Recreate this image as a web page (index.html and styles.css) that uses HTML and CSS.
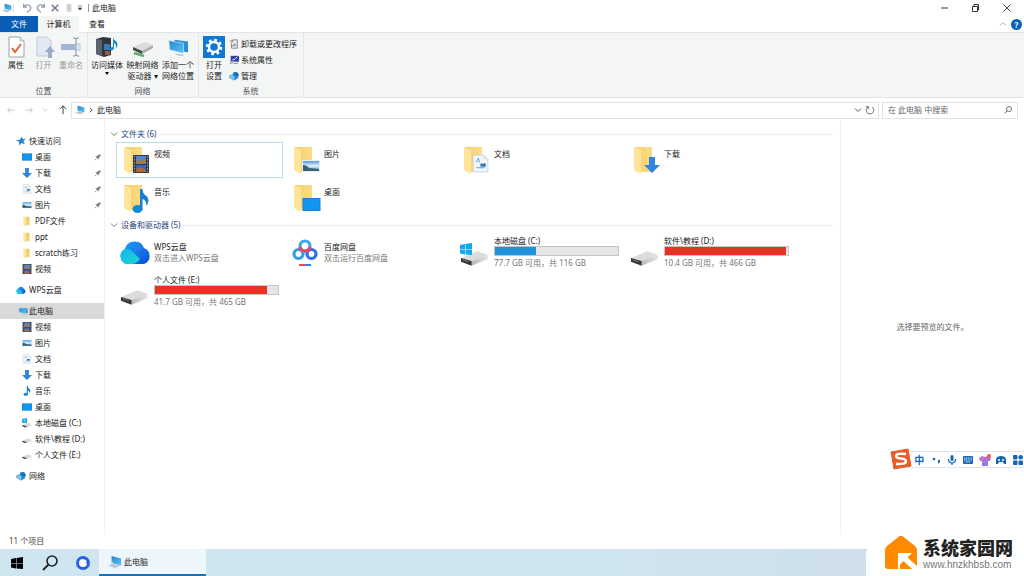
FILE: index.html
```html
<!DOCTYPE html>
<html lang="zh-CN">
<head>
<meta charset="utf-8">
<title>此电脑</title>
<link rel="stylesheet" href="styles.css">
</head>
<body>
<svg class="sprite" aria-hidden="true">
  <defs>
    <linearGradient id="g-screen" x1="0" y1="0" x2="1" y2="1"><stop offset="0" stop-color="#1e88d2"/><stop offset="1" stop-color="#5cc3f5"/></linearGradient>
    <linearGradient id="g-folder" x1="0" y1="0" x2="1" y2="0"><stop offset="0" stop-color="#f6cf6c"/><stop offset="1" stop-color="#fbdc85"/></linearGradient>
    <linearGradient id="g-drive" x1="0" y1="0" x2="1" y2="0"><stop offset="0" stop-color="#b9b9b9"/><stop offset="1" stop-color="#e6e6e6"/></linearGradient>
    <linearGradient id="g-cloud" x1="0" y1="0" x2="1" y2="1"><stop offset="0" stop-color="#1fa4fb"/><stop offset="1" stop-color="#0a50d8"/></linearGradient>
    <linearGradient id="g-cyan" x1="0" y1="0" x2="1" y2="1"><stop offset="0" stop-color="#12b7ee"/><stop offset="1" stop-color="#20d6cf"/></linearGradient>
    <linearGradient id="g-photo" x1="0" y1="0" x2="0" y2="1"><stop offset="0" stop-color="#4f9ddb"/><stop offset=".5" stop-color="#e3f1fa"/><stop offset="1" stop-color="#3f8db8"/></linearGradient>
    <linearGradient id="g-shirt" x1="0" y1="0" x2="1" y2="1"><stop offset="0" stop-color="#e06bc0"/><stop offset="1" stop-color="#6f83f2"/></linearGradient>
  </defs>
  <symbol id="pc" viewBox="0 0 16 16"><path d="M4 1l11 3v8L5 9z" fill="url(#g-screen)"/><path d="M3 1l1 0 1 8-1 1z" fill="#8ccdf0"/><path d="M0 12l6-2 8 2-6 3z" fill="#bcc9d0"/></symbol>
  <symbol id="pcs" viewBox="0 0 24 20"><path d="M8 2l15 2v12L9 13z" fill="#2c8fd6"/><path d="M2 3l16 3v11L3 13z" fill="url(#g-screen)" stroke="#dff1fb" stroke-width=".6"/><path d="M8 17l8 1 3 2-8-1z" fill="#a9c6d4"/></symbol>
  <symbol id="folder" viewBox="0 0 26 30"><path d="M2 1h17v25H7z" fill="url(#g-folder)"/><path d="M1 1l7 3v24l-2-1-5-3z" fill="#ffe49a"/></symbol>
  <symbol id="folder-s" viewBox="0 0 12 12"><path d="M2 1h7v10H2z" fill="#f4cd69"/><path d="M2 1l3 1v10l-3-1z" fill="#ffe6a0"/></symbol>
  <symbol id="film" viewBox="0 0 16 18"><path d="M0 0h16v18H0z" fill="#343a48"/><path d="M3 1h10v8H3z" fill="#4f86dc"/><path d="M3 6l4-3 2 2 4-1v5H3z" fill="#9a7a5a"/><path d="M3 10h10v7H3z" fill="#2f66c4"/><path d="M3 14l5-2 5 3v2H3z" fill="#b8643f"/><path d="M1.500 1v16M14.500 1v16" stroke="#c4cad6" stroke-width=".7" stroke-dasharray="1.500 1.500"/></symbol>
  <symbol id="photo" viewBox="0 0 18 14"><path d="M0 1h18v12H0z" fill="#e6eef3"/><path d="M1 2h16v10H1z" fill="url(#g-photo)"/><path d="M1 6q4 0 6 3l10 1v2H1z" fill="#37627a"/></symbol>
  <symbol id="doc" viewBox="0 0 16 18"><path d="M1 1h10l4 4v12H1z" fill="#f1f6fa" stroke="#bccad3" stroke-width=".7"/><path d="M11 1v4h4" fill="#d6e1e8"/><path d="M4 8l2-4 1 4M8 10h5M4 13h8" stroke="#3d95d2" stroke-width=".8" fill="none"/><path d="M8 9h5v3H8z" fill="#3474b4"/></symbol>
  <symbol id="down" viewBox="0 0 16 16"><path d="M5 0h6v8h5l-8 8-8-8h5z" fill="#2b86dc"/></symbol>
  <symbol id="note" viewBox="0 0 16 24"><ellipse cx="5" cy="20" rx="5" ry="4" fill="#0f8bdc"/><path d="M7.500 0h2.500q0 5 4 7 4 4 0 10 0-6-4-7v11H7.500z" fill="#1580d2"/></symbol>
  <symbol id="desk" viewBox="0 0 18 13"><path d="M0 0h18v13H0z" fill="#1380d4"/><path d="M1 1h16v11H1z" fill="#1197f2"/></symbol>
  <symbol id="cloud" viewBox="0 0 32 26"><path d="M8 25a8 8 0 0 1-2-15A10 10 0 0 1 25 9a8.500 8.500 0 0 1 0 16z" fill="url(#g-cloud)"/><path d="M6 10Q10 9 13 12l8 8q-4 5-8 5H8A8 8 0 0 1 6 10z" fill="url(#g-cyan)"/><path d="M13 12Q20 5 25 9q-5 1-9 6z" fill="#2e7bf0" opacity=".6"/></symbol>
  <symbol id="drive" viewBox="0 0 30 16"><path d="M1 8L18 1l11 4-17 6z" fill="#dcdcdc"/><path d="M12 11l17-6v4l-17 7z" fill="url(#g-drive)"/><path d="M1 8l11 3v5L1 12z" fill="#353535"/><path d="M3 10l6 2" stroke="#888" stroke-width=".8"/></symbol>
  <symbol id="win" viewBox="0 0 12 12"><path d="M0 2l5-1v5H0zM5.500 1l6.500-1v6H5.500zM0 6.500h5v5l-5-1zM5.500 6.500H12V12l-6.500-.5z"/></symbol>
  <symbol id="star" viewBox="0 0 16 16"><path d="M9 1l2 4 5-1-4 4 2 5-5-2-4 4 0-6-5-2 6-1z" fill="#2585cf"/></symbol>
  <symbol id="pin" viewBox="0 0 12 12"><path d="M7 1l4 4-2 0-2 3 0 2-5-5h2l3-2z" fill="#75797d"/><path d="M4 8l-3 3" stroke="#75797d"/></symbol>
  <symbol id="net" viewBox="0 0 16 16"><path d="M0 7l6-2 1-3 6-1 3 5-2 6-6 3-7-4z" fill="#2b8bce"/><path d="M0 7l6-1 3 4-1 5-7-4z" fill="#7fc0e8"/><path d="M9 2l6 3-2 4-5-3z" fill="#166fb6"/></symbol>
  <symbol id="baidu" viewBox="0 0 26 28"><g fill="none" stroke-width="3.200"><circle cx="6.500" cy="15" r="4.500" stroke="#2f9cf0"/><circle cx="19.500" cy="15" r="4.500" stroke="#2c6ff0"/><circle cx="13" cy="7" r="5" stroke="#38a8ef"/><path d="M8 8a5 5 0 0 0 5 4 5 5 0 0 0 5-4" stroke="#f0445a"/></g><path d="M7 26h6" stroke="#eb4b56" stroke-width="2"/><path d="M13 26h6" stroke="#2e86ee" stroke-width="2"/></symbol>
  <symbol id="chev" viewBox="0 0 8 8"><path d="M1 2.500l3 3 3-3" fill="none" stroke="currentColor"/></symbol>
  <symbol id="undo" viewBox="0 0 12 12"><path d="M2 1v4h4M2 5q3-4 7-2 3 3 0 6l-3 2" fill="none" stroke="currentColor" stroke-width="1.500"/></symbol>
  <symbol id="cross" viewBox="0 0 12 12"><path d="M2 2l8 8M10 2l-8 8" fill="none" stroke="currentColor" stroke-width="1.600"/></symbol>
  <symbol id="glass" viewBox="0 0 16 16"><circle cx="10" cy="6" r="5" fill="none" stroke="currentColor" stroke-width="1.600"/><path d="M6.500 9.500L1 15" stroke="currentColor" stroke-width="1.800"/></symbol>
  <symbol id="arrow" viewBox="0 0 12 12"><path d="M11 6H1M5 2L1 6l4 4" fill="none" stroke="currentColor" stroke-width="1.200"/></symbol>
</svg>

<div class="window">
  <header class="titlebar">
    <svg class="ic10"><use href="#pc"/></svg>
    <span class="rule"></span>
    <button class="tool" aria-label="撤消"><svg class="ic10"><use href="#undo"/></svg></button>
    <button class="tool" aria-label="恢复"><svg class="ic10 flip"><use href="#undo"/></svg></button>
    <button class="tool dark" aria-label="删除"><svg class="ic10"><use href="#cross"/></svg></button>
    <button class="tool" aria-label="属性"><svg class="ic10" viewBox="0 0 12 12"><path d="M3 1h6v10H3z" fill="#d9dde1"/><path d="M4 3h4M4 5h4M4 7h4" stroke="#b8bec4"/></svg></button>
    <button class="tool narrow" aria-label="自定义"><svg class="ic6" viewBox="0 0 6 6"><path d="M1 1h4M1 3h4L3 5z" stroke="#444" stroke-width=".6" fill="#444"/></svg></button>
    <span class="rule strong"></span>
    <h1>此电脑</h1>
    <div class="winctl">
      <button aria-label="最小化"><svg class="ic10" viewBox="0 0 10 10"><path d="M2 5h7" stroke="#333"/></svg></button>
      <button aria-label="还原"><svg class="ic10" viewBox="0 0 10 10"><path d="M2.500 3.500h5v5h-5zM4 3V1.500h4.500V7H8" fill="none" stroke="#333"/></svg></button>
      <button aria-label="关闭"><svg class="ic10" viewBox="0 0 10 10"><path d="M1.500 1.500l7 7M8.500 1.500l-7 7" stroke="#333" stroke-width=".9"/></svg></button>
    </div>
  </header>

  <nav class="tabs">
    <button class="tab file">文件</button>
    <button class="tab on">计算机</button>
    <button class="tab">查看</button>
    <div class="tabend">
      <svg class="ic8 up"><use href="#chev"/></svg>
      <button class="help" aria-label="帮助">?</button>
    </div>
  </nav>

  <section class="ribbon">
    <div class="group place">
      <div class="tools">
        <button class="big"><svg class="ic22" viewBox="0 0 22 22"><path d="M4 1h11l4 4v16H4z" fill="#fff" stroke="#9aa3ab"/><path d="M15 1v4h4" fill="#dde3e8" stroke="#9aa3ab" stroke-width=".7"/><path d="M7 12l3 4 6-8" fill="none" stroke="#e0652f" stroke-width="2"/></svg><span>属性</span></button>
        <button class="big" disabled><svg class="ic22" viewBox="0 0 22 22"><path d="M4 1h10l4 4v15H4z" fill="#e3e9f4" stroke="#c0c9da"/><path d="M15 22v-6h-3l5-6 5 6h-3v6z" fill="#9eabc7"/></svg><span>打开</span></button>
        <button class="big" disabled><svg class="ic22" viewBox="0 0 22 22"><path d="M1 8h14v6H1z" fill="#a4b6d7"/><path d="M15 8h5v6h-5" fill="#e5ebf5" stroke="#b9c4d6"/><path d="M13 2h2l1 1 1-1h2M16 3v16M13 20h2l1-1 1 1h2" fill="none" stroke="#8391a9"/></svg><span>重命名</span></button>
      </div>
      <p>位置</p>
    </div>
    <div class="group network">
      <div class="tools">
        <button class="big"><svg class="ic22" viewBox="0 0 22 22"><path d="M0 3l7-2 8 1v17l-7 2-8-3z" fill="#30363f"/><path d="M0 3l6 1v16l-6-2z" fill="#59616c"/><path d="M8 8h6v6H8z" fill="#3b78b4"/><path d="M9 15h5v4H9z" fill="#935943"/><path d="M17 0q0 4 3 5 3 4 0 8 1-4-2-6v6q-4 3-4 0 0-2 3-2z" fill="#178bd8"/></svg><span>访问媒体</span><svg class="ic6" viewBox="0 0 6 6"><path d="M1 1h4L3 4z"/></svg></button>
        <button class="big"><svg class="ic22" viewBox="0 0 22 22"><path d="M1 11l12-5 8 3-11 6z" fill="#dcdcdc"/><path d="M10 15l11-6v3l-11 6z" fill="#aaa"/><path d="M1 11l9 4v3l-9-4z" fill="#3b4b42"/><path d="M2 17l10 3" stroke="#5cae6c" stroke-width="2.500"/></svg><span>映射网络<br>驱动器 ▾</span></button>
        <button class="big"><svg class="ic22"><use href="#pcs"/></svg><span>添加一个<br>网络位置</span></button>
      </div>
      <p>网络</p>
    </div>
    <div class="group system">
      <div class="tools">
        <button class="big"><svg class="ic22" viewBox="0 0 22 22"><path d="M0 0h22v22H0z" fill="#0f78d2"/><circle cx="11" cy="11" r="5" fill="none" stroke="#fff" stroke-width="2.400"/><circle cx="11" cy="11" r="7" fill="none" stroke="#fff" stroke-width="2.600" stroke-dasharray="2.750 2.750"/></svg><span>打开<br>设置</span></button>
        <ul class="small">
          <li><button><svg class="ic10" viewBox="0 0 12 12"><path d="M5 1h5v10H3V5z" fill="#eee" stroke="#777"/><path d="M1 3l4-2M3 8h4" stroke="#777"/><circle cx="7" cy="7" r="2" fill="#aaa"/></svg>卸载或更改程序</button></li>
          <li><button><svg class="ic10" viewBox="0 0 12 12"><path d="M2 1h10v7H2z" fill="#3141a8"/><path d="M4 5l2 1 4-4" stroke="#fff" fill="none"/><path d="M1 8l4-1 1 3-5 1z" fill="#a9b4bd"/><path d="M6 10h5" stroke="#777"/></svg>系统属性</button></li>
          <li><button><svg class="ic10"><use href="#net"/></svg>管理</button></li>
        </ul>
      </div>
      <p>系统</p>
    </div>
  </section>

  <div class="addressrow">
    <div class="history">
      <button disabled aria-label="后退"><svg class="ic8"><use href="#arrow"/></svg></button>
      <button disabled aria-label="前进"><svg class="ic8 flip"><use href="#arrow"/></svg></button>
      <button disabled aria-label="最近"><svg class="ic6"><use href="#chev"/></svg></button>
      <button aria-label="上移"><svg class="ic10 quarter"><use href="#arrow"/></svg></button>
    </div>
    <div class="address">
      <svg class="ic10"><use href="#pc"/></svg>
      <svg class="ic6 side"><use href="#chev"/></svg>
      <a href="#pc">此电脑</a>
      <button class="drop" aria-label="展开"><svg class="ic8"><use href="#chev"/></svg></button>
      <button aria-label="刷新"><svg class="ic10" viewBox="0 0 12 12"><path d="M8.500 2.500a4.500 4.500 0 1 1-5 0M1 2h3v3" fill="none" stroke="#555"/></svg></button>
    </div>
    <div class="search">
      <input type="text" placeholder="在 此电脑 中搜索" aria-label="在 此电脑 中搜索">
      <svg class="ic8"><use href="#glass"/></svg>
    </div>
  </div>

  <main class="body">
    <nav class="tree">
      <ul>
        <li class="root"><a href="#q"><svg class="ic10"><use href="#star"/></svg>快速访问</a></li>
        <li><a href="#a"><svg class="ic10"><use href="#desk"/></svg>桌面<svg class="ic8 pin"><use href="#pin"/></svg></a></li>
        <li><a href="#a"><svg class="ic10"><use href="#down"/></svg>下载<svg class="ic8 pin"><use href="#pin"/></svg></a></li>
        <li><a href="#a"><svg class="ic10"><use href="#doc"/></svg>文档<svg class="ic8 pin"><use href="#pin"/></svg></a></li>
        <li><a href="#a"><svg class="ic10"><use href="#photo"/></svg>图片<svg class="ic8 pin"><use href="#pin"/></svg></a></li>
        <li><a href="#a"><svg class="ic10"><use href="#folder-s"/></svg>PDF文件</a></li>
        <li><a href="#a"><svg class="ic10"><use href="#folder-s"/></svg>ppt</a></li>
        <li><a href="#a"><svg class="ic10"><use href="#folder-s"/></svg>scratch练习</a></li>
        <li><a href="#a"><svg class="ic10"><use href="#film"/></svg>视频</a></li>
      </ul>
      <ul>
        <li class="root"><a href="#w"><svg class="ic10"><use href="#cloud"/></svg>WPS云盘</a></li>
      </ul>
      <ul>
        <li class="root current"><a href="#p"><svg class="ic10"><use href="#pcs"/></svg>此电脑</a></li>
        <li><a href="#a"><svg class="ic10"><use href="#film"/></svg>视频</a></li>
        <li><a href="#a"><svg class="ic10"><use href="#photo"/></svg>图片</a></li>
        <li><a href="#a"><svg class="ic10"><use href="#doc"/></svg>文档</a></li>
        <li><a href="#a"><svg class="ic10"><use href="#down"/></svg>下载</a></li>
        <li><a href="#a"><svg class="ic10"><use href="#note"/></svg>音乐</a></li>
        <li><a href="#a"><svg class="ic10"><use href="#desk"/></svg>桌面</a></li>
        <li><a href="#a"><svg class="ic10" viewBox="0 0 30 30"><use href="#win" width="16" height="16" fill="#14a5ea"/><use href="#drive" y="13" width="30" height="16"/></svg>本地磁盘 (C:)</a></li>
        <li><a href="#a"><svg class="ic10" viewBox="0 0 30 26"><use href="#drive" y="10" width="30" height="16"/></svg>软件\教程 (D:)</a></li>
        <li><a href="#a"><svg class="ic10" viewBox="0 0 30 26"><use href="#drive" y="10" width="30" height="16"/></svg>个人文件 (E:)</a></li>
      </ul>
      <ul>
        <li class="root"><a href="#n"><svg class="ic10"><use href="#net"/></svg>网络</a></li>
      </ul>
    </nav>

    <div class="content">
      <h2><svg class="ic8"><use href="#chev"/></svg>文件夹 (6)</h2>
      <div class="grid">
        <a class="tile picked" href="#f"><svg class="ic30" viewBox="0 0 30 30"><use href="#folder" width="26" height="30"/><use href="#film" x="8" y="9" width="20" height="18"/></svg><span class="name">视频</span></a>
        <a class="tile" href="#f"><svg class="ic30" viewBox="0 0 30 30"><use href="#folder" width="26" height="30"/><use href="#photo" x="9" y="13" width="18" height="14"/></svg><span class="name">图片</span></a>
        <a class="tile" href="#f"><svg class="ic30" viewBox="0 0 30 30"><use href="#folder" width="26" height="30"/><use href="#doc" x="8" y="8" width="19" height="19"/></svg><span class="name">文档</span></a>
        <a class="tile" href="#f"><svg class="ic30" viewBox="0 0 30 30"><use href="#folder" width="26" height="30"/><use href="#down" x="11" y="11" width="16" height="16"/></svg><span class="name">下载</span></a>
        <a class="tile" href="#f"><svg class="ic30" viewBox="0 0 30 30"><use href="#folder" width="26" height="30"/><use href="#note" x="9" y="5" width="17" height="24"/></svg><span class="name">音乐</span></a>
        <a class="tile" href="#f"><svg class="ic30" viewBox="0 0 30 30"><use href="#folder" width="26" height="30"/><use href="#desk" x="9" y="14" width="19" height="13"/></svg><span class="name">桌面</span></a>
      </div>
      <h2><svg class="ic8"><use href="#chev"/></svg>设备和驱动器 (5)</h2>
      <div class="grid devices">
        <a class="tile" href="#d"><svg class="ic32"><use href="#cloud"/></svg><span class="info"><span class="name">WPS云盘</span><span class="note">双击进入WPS云盘</span></span></a>
        <a class="tile" href="#d"><svg class="ic32" viewBox="-3 -3 32 32"><use href="#baidu" width="26" height="28"/></svg><span class="info"><span class="name">百度网盘</span><span class="note">双击运行百度网盘</span></span></a>
        <a class="tile" href="#d"><svg class="ic32" viewBox="0 0 32 32"><use href="#drive" x="1" y="14" width="29" height="16"/><use href="#win" x="1" y="7" width="12" height="12" fill="#12a8ee"/></svg><span class="info"><span class="name">本地磁盘 (C:)</span><span class="meter"><span class="fill" style="width:33%"></span></span><span class="note">77.7 GB 可用，共 116 GB</span></span></a>
        <a class="tile" href="#d"><svg class="ic32" viewBox="0 0 32 32"><use href="#drive" x="1" y="14" width="29" height="16"/></svg><span class="info"><span class="name">软件\教程 (D:)</span><span class="meter"><span class="fill full" style="width:98%"></span></span><span class="note">10.4 GB 可用，共 466 GB</span></span></a>
        <a class="tile" href="#d"><svg class="ic32" viewBox="0 0 32 32"><use href="#drive" x="1" y="14" width="29" height="16"/></svg><span class="info"><span class="name">个人文件 (E:)</span><span class="meter"><span class="fill full" style="width:91%"></span></span><span class="note">41.7 GB 可用，共 465 GB</span></span></a>
      </div>
    </div>

    <aside class="preview">选择要预览的文件。</aside>
  </main>
  <footer class="status">11 个项目</footer>
</div>

<div class="taskbar">
  <button aria-label="开始"><svg class="ic12"><use href="#win"/></svg></button>
  <button aria-label="搜索"><svg class="ic16"><use href="#glass"/></svg></button>
  <button aria-label="浏览器"><svg class="ic14" viewBox="0 0 14 14"><circle cx="7" cy="7" r="7" fill="#285fe6"/><path d="M7 3a4 4 0 1 0 4 4q-2 1-3-1-1-1 0-3z" fill="#fff"/><circle cx="8.500" cy="5.500" r="2" fill="#fff"/></svg></button>
  <button class="task"><svg class="ic14"><use href="#pc"/></svg>此电脑</button>
</div>

<div class="ime">
  <svg class="ime-logo" viewBox="0 0 22 22"><path d="M1 4l17-3 3 17-17 3z" fill="#ea5b2a" stroke="#ea5b2a" stroke-linejoin="round"/><path d="M16 6q-10-1-10 2 0 2 5 2.500t5 3q0 3-10 2.500" fill="none" stroke="#fff" stroke-width="2.400"/></svg>
  <button class="lang">中</button>
  <button aria-label="标点"><svg class="ic10" viewBox="0 0 10 10"><circle cx="3" cy="4" r="1.300"/><path d="M7 5h2v2L7 9z"/></svg></button>
  <button aria-label="语音"><svg class="ic10" viewBox="0 0 10 10"><rect x="3.500" y="0" width="3" height="6" rx="1.500"/><path d="M1.500 4q0 4 3.500 4t3.500-4M5 8v2" fill="none" stroke="#1767b4" stroke-width="1.200"/></svg></button>
  <button aria-label="键盘"><svg class="ic10" viewBox="0 0 10 10"><rect y="1" width="10" height="8" rx="1"/><path d="M1 3h8M1 5h8M2.500 7h5" stroke="#fff" stroke-width=".9" stroke-dasharray="1.200 .6"/></svg></button>
  <button aria-label="皮肤"><svg class="ic12" viewBox="0 0 12 12"><path d="M0 4l3-2 3 1 3-1 3 2-1 3H9v5H3V7H1z" fill="url(#g-shirt)"/><circle cx="10" cy="2" r="2" fill="#f45948"/></svg></button>
  <button aria-label="游戏"><svg class="ic10" viewBox="0 0 10 10"><path d="M0 9V4q1-3 5-3t5 3v5H8L7 7H3L2 9z"/><path d="M2 5h2M6 5h2" stroke="#fff" stroke-width="1.300"/></svg></button>
  <button aria-label="工具箱"><svg class="ic10" viewBox="0 0 10 10"><rect width="4.500" height="4.500" rx="1"/><circle cx="7.700" cy="2.300" r="2.300"/><rect y="5.500" width="4.500" height="4.500" rx="1"/><rect x="5.500" y="5.500" width="4.500" height="4.500" rx="1"/></svg></button>
</div>

<div class="sitemark">
  <svg class="house" viewBox="0 0 32 34"><path d="M2 11L14 1.500q2-1.500 4 0L30 11q2 2 2 4v16q0 3-3 3H3q-3 0-3-3V15q0-2 2-4z" fill="#ff8a00"/><path d="M13 18h14l-4.500 4.500L32 31v3h-5l-8.500-8-3.500 3.500V34h-2z" fill="#fff"/></svg>
  <div class="sitename"><strong>系统家园网</strong><span>www.hnzkhbsb.com</span></div>
</div>
</body>
</html>
```
FILE: styles.css
```css
* { box-sizing: border-box; }
html, body { height: 100%; }
body {
  margin: 0;
  display: flex;
  flex-direction: column;
  position: relative;
  overflow: hidden;
  background: #fff;
  color: #222;
  font: 8px/12px "Noto Sans", "Noto Sans CJK SC", sans-serif;
}
button { margin: 0; padding: 0; border: 0; background: none; font: inherit; color: inherit; }
a { color: inherit; text-decoration: none; }
ul, p, h1, h2 { margin: 0; padding: 0; font: inherit; list-style: none; }
svg { display: block; flex: none; }
.sprite { position: absolute; width: 0; height: 0; }
.ic6 { width: 6px; height: 6px; }
.ic8 { width: 8px; height: 8px; }
.ic10 { width: 10px; height: 10px; }
.ic12 { width: 12px; height: 12px; }
.ic14 { width: 14px; height: 14px; }
.ic16 { width: 16px; height: 16px; }
.ic22 { width: 22px; height: 22px; }
.ic30 { width: 30px; height: 30px; }
.ic32 { width: 32px; height: 32px; }
.flip { transform: scaleX(-1); }
.up { transform: rotate(180deg); }
.quarter { transform: rotate(90deg); }
.side { transform: rotate(-90deg); }

.window { flex: 1; min-height: 0; display: flex; flex-direction: column; }

.titlebar { display: flex; align-items: center; height: 16px; padding-left: 2px; }
.rule { width: 1px; height: 8px; margin: 0 6px 0 1px; background: #ddd; }
.rule.strong { margin: 0 3px 0 4px; background: #999; }
.tool { width: 14px; display: grid; place-items: center; color: #8f9bb3; }
.tool.dark { color: #68738a; }
.tool.narrow { width: 8px; }
.winctl { display: flex; margin-left: auto; }
.winctl button { width: 31px; display: grid; place-items: center; }
.winctl button:last-child { width: 34px; }

.tabs { display: flex; height: 16px; }
.tab { padding: 0 10px; }
.tab.file { width: 38px; background: #0a5fb4; color: #fff; }
.tab.on { width: 41px; padding: 0; background: #f4f6f6; box-shadow: 0 1px #f4f6f6; z-index: 1; }
.tabend { display: flex; align-items: center; gap: 4px; margin-left: auto; padding-right: 2px; color: #aaa; }
.help { width: 11px; height: 11px; border-radius: 50%; background: #0b61b8; color: #fff; font-weight: 700; line-height: 11px; }

.ribbon { display: flex; height: 66px; background: #f4f6f6; border: solid #e2e4e5; border-width: 1px 0; }
.group { display: flex; flex-direction: column; justify-content: space-between; padding: 3px 4px 0; border-right: 1px solid #e4e6e8; text-align: center; }
.group p { color: #555; }
.place { width: 88px; }
.network { width: 111px; padding: 3px 4px 0 3px; }
.system { width: 105px; padding: 3px 4px 0 3px; }
.tools { display: flex; justify-content: space-between; }
.big { display: flex; flex-direction: column; align-items: center; gap: 1px; min-width: 24px; line-height: 11px; white-space: nowrap; }
.big:disabled { color: #999; }
.small { display: flex; flex-direction: column; }
.small button { display: flex; align-items: center; gap: 2px; height: 16px; white-space: nowrap; }
.system .tools { justify-content: flex-start; gap: 3px; }

.addressrow { display: flex; align-items: center; gap: 3px; height: 22px; padding: 2px 6px 0 7px; }
.history { display: flex; align-items: center; justify-content: space-between; width: 61px; color: #444; }
.history button:disabled { color: #bbb; }
.address { flex: 1; display: flex; align-items: center; gap: 3px; height: 17px; padding: 0 3px; border: 1px solid #e2e2e2; }
.drop { margin-left: auto; color: #555; }
.search { width: 136px; height: 17px; display: flex; align-items: center; padding: 0 5px; border: 1px solid #e2e2e2; color: #555; }
.search input { flex: 1; min-width: 0; padding: 0; border: 0; outline: 0; background: none; font: inherit; }
.search input::placeholder { color: #666; }

.body { flex: 1; min-height: 0; display: flex; }
.tree { width: 105px; display: flex; flex-direction: column; gap: 5px; padding-top: 13px; border-right: 1px solid #f2f2f2; }
.tree a { display: flex; align-items: center; gap: 3px; height: 16px; padding: 0 2px 0 22px; }
.tree .root a { padding-left: 16px; }
.tree .current a { background: #d9d9d9; padding-left: 18px; gap: 1px; }
.tree .pin { margin-left: auto; }

.content { flex: 1; min-width: 0; padding: 7px 7px 0 5px; }
.content h2 { display: flex; align-items: center; gap: 3px; height: 14px; color: #2a3f80; white-space: nowrap; }
.content h2 svg { color: #777; }
.content h2::after { content: ""; flex: 1; height: 1px; background: #eee; }
.grid { display: grid; grid-template-columns: repeat(auto-fill, 167px); gap: 2px 3px; padding: 1px 0 2px 6px; }
.tile { display: flex; gap: 1px; height: 36px; padding: 3px 2px 2px 6px; border: 1px solid transparent; }
.tile.picked { border-color: #b7dde4; }
.name { display: block; padding-top: 2px; }
.devices .tile { align-items: center; height: 37px; gap: 3px; padding: 0 3px 0 2px; }
.info { flex: 1; min-width: 0; line-height: 11px; }
.info .name { padding: 0; }
.note { display: block; color: #777; white-space: nowrap; }
.meter { display: block; height: 10px; margin-bottom: 1px; border: 1px solid #c4c4c4; background: #e6e6e6; }
.fill { display: block; height: 100%; background: #1e92da; }
.fill.full { background: #e93223; }

.preview { width: 184px; display: grid; place-items: center; border-left: 1px solid #f2f2f2; color: #666; }
.status { height: 15px; padding-left: 9px; line-height: 14px; color: #444; }

.taskbar { display: flex; height: 27px; background: linear-gradient(90deg, #cfe5ef 0 60%, #cfdbea 100%); }
.taskbar button { display: flex; align-items: center; justify-content: center; width: 33px; }
.taskbar .task { width: 107px; justify-content: flex-start; gap: 2px; padding-left: 9px; border-bottom: 2px solid #1673bd; background: #edf6fa; }

.ime { position: absolute; right: 0; top: 451px; display: flex; align-items: center; gap: 4px; width: 127px; height: 17px; padding-left: 15px; border: 1px solid #dce6ee; border-right: 0; background: #fff; fill: #1767b4; }
.ime button { flex: 1; display: grid; place-items: center; color: #1767b4; }
.ime .lang { font-size: 10px; font-weight: 700; line-height: 14px; }
.ime-logo { position: absolute; left: -8px; top: -4px; width: 22px; height: 22px; }

.sitemark { position: absolute; right: 0; bottom: 0; display: flex; align-items: center; gap: 6px; width: 158px; height: 44px; padding: 0 0 4px 19px; border-top-left-radius: 24px; background: #fff; }
.house { width: 32px; height: 34px; }
.sitename { display: flex; flex-direction: column; gap: 1px; padding-top: 3px; }
.sitename strong { font-size: 18px; line-height: 22px; font-weight: 900; color: #222; white-space: nowrap; }
.sitename span { font: 10px/10px "Liberation Sans", sans-serif; color: #777; white-space: nowrap; }
```
